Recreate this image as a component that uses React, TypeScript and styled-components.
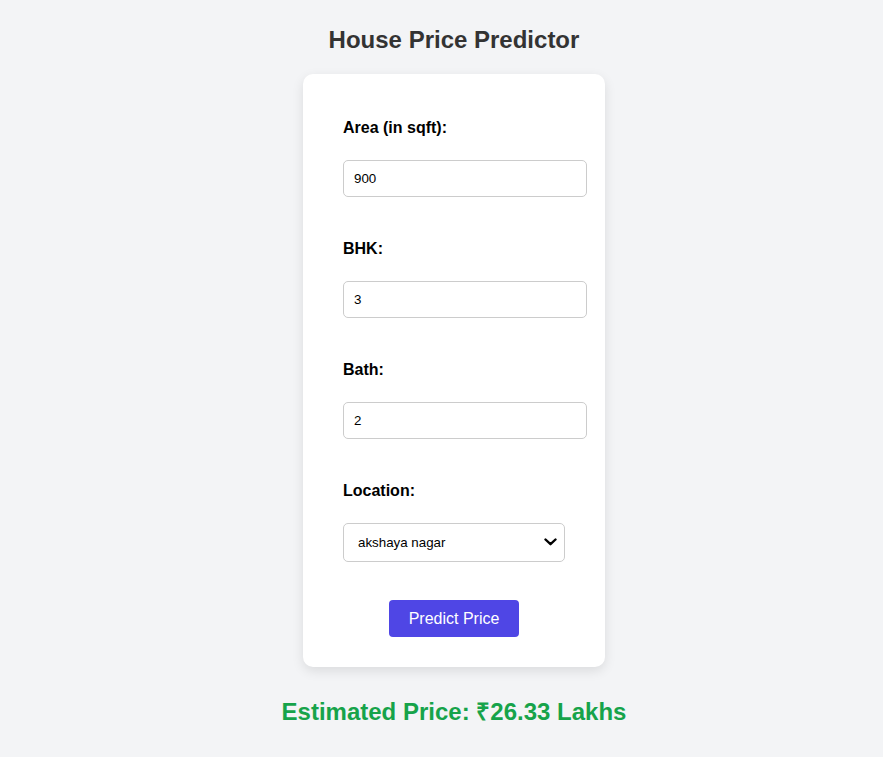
import React from "react";
import styled, { createGlobalStyle } from "styled-components";

const Global = createGlobalStyle`
  html, body { margin: 0; padding: 0; }
  body {
    background: #f3f4f6;
    font-family: "Liberation Sans", Arial, sans-serif;
  }
`;

const Page = styled.div`
  display: flex;
  flex-direction: column;
  align-items: center;
  padding-top: 26px;
  padding-left: 25px;
`;

const Title = styled.h1`
  margin: 0 0 20px;
  font-size: 24px;
  line-height: 28px;
  font-weight: 700;
  color: #333;
`;

const Card = styled.div`
  width: 222px;
  padding: 45px 40px 30px;
  background: #fff;
  border-radius: 10px;
  box-shadow: 0 4px 12px rgba(0, 0, 0, 0.1);
  display: flex;
  flex-direction: column;
`;

const Field = styled.div`
  display: flex;
  flex-direction: column;
  margin-bottom: 43px;
`;

const Label = styled.label`
  display: block;
  font-size: 16px;
  line-height: 18px;
  font-weight: 700;
  color: #000;
  margin-bottom: 23px;
`;

const Input = styled.input`
  box-sizing: content-box;
  width: 100%;
  height: 15px;
  padding: 10px;
  border: 1px solid #ccc;
  border-radius: 5px;
  font-family: Arial, "Liberation Sans", sans-serif;
  font-size: 13.33px;
  color: #000;
  background: #fff;
  outline: none;
`;

const SelectWrap = styled.div`
  position: relative;
  width: 100%;
`;

const Select = styled.select`
  appearance: none;
  -webkit-appearance: none;
  width: 100%;
  height: 39px;
  padding: 0 30px 0 14px;
  border: 1px solid #ccc;
  border-radius: 5px;
  font-family: Arial, "Liberation Sans", sans-serif;
  font-size: 13.33px;
  color: #000;
  background: #fff;
  outline: none;
`;

const Chevron = styled.svg`
  position: absolute;
  right: 8px;
  top: 15px;
  width: 13px;
  height: 8px;
  pointer-events: none;
`;

const Button = styled.button`
  align-self: center;
  width: 130px;
  height: 37px;
  margin-top: -5px;
  border: none;
  border-radius: 4px;
  background: #4f46e5;
  color: #fff;
  font-family: "Liberation Sans", Arial, sans-serif;
  font-size: 16px;
  cursor: pointer;
`;

const Result = styled.h2`
  margin: 31px 0 0;
  font-size: 24px;
  line-height: 28px;
  font-weight: 700;
  color: #16a34a;
`;

export default function App() {
  return (
    <>
      <Global />
      <Page>
        <Title>House Price Predictor</Title>
        <Card>
          <Field>
            <Label>Area (in sqft):</Label>
            <Input type="number" defaultValue="900" />
          </Field>
          <Field>
            <Label>BHK:</Label>
            <Input type="number" defaultValue="3" />
          </Field>
          <Field>
            <Label>Bath:</Label>
            <Input type="number" defaultValue="2" />
          </Field>
          <Field>
            <Label>Location:</Label>
            <SelectWrap>
              <Select defaultValue="akshaya nagar">
                <option value="akshaya nagar">akshaya nagar</option>
                <option value="whitefield">whitefield</option>
              </Select>
              <Chevron viewBox="0 0 13 8">
                <path d="M1.5 1.5 L6.5 6.2 L11.5 1.5" fill="none" stroke="#000" strokeWidth="2.4" strokeLinecap="round" strokeLinejoin="round" />
              </Chevron>
            </SelectWrap>
          </Field>
          <Button>Predict Price</Button>
        </Card>
        <Result>Estimated Price: ₹26.33 Lakhs</Result>
      </Page>
    </>
  );
}
